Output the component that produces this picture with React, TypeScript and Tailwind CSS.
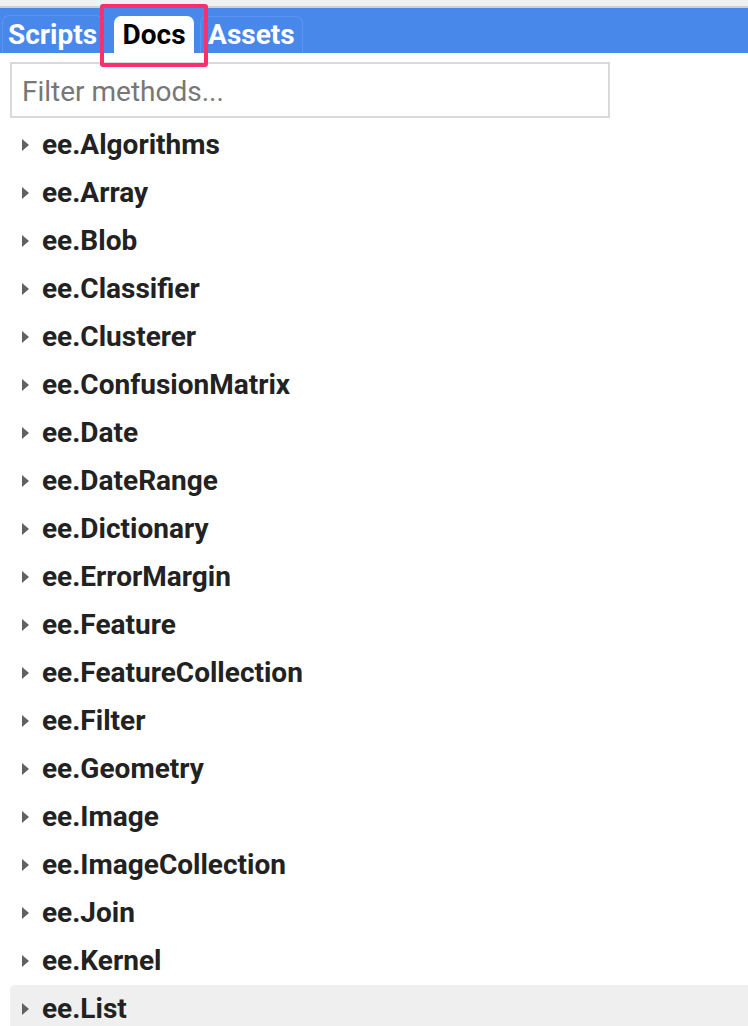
const items = [
  "ee.Algorithms",
  "ee.Array",
  "ee.Blob",
  "ee.Classifier",
  "ee.Clusterer",
  "ee.ConfusionMatrix",
  "ee.Date",
  "ee.DateRange",
  "ee.Dictionary",
  "ee.ErrorMargin",
  "ee.Feature",
  "ee.FeatureCollection",
  "ee.Filter",
  "ee.Geometry",
  "ee.Image",
  "ee.ImageCollection",
  "ee.Join",
  "ee.Kernel",
  "ee.List",
];

function Caret() {
  return (
    <svg width="9" height="14" viewBox="0 0 9 14" className="shrink-0">
      <path d="M1 1 L8 7 L1 13 Z" fill="#616161" />
    </svg>
  );
}

export default function App() {
  return (
    <div className="w-[748px] h-[1026px] overflow-hidden bg-white font-['Roboto',sans-serif]">
      <div className="h-[6px] bg-[#f1f1f1]" />
      <div className="h-[2px] bg-[#cfcfcf]" />
      <div className="relative h-[45px] bg-[#4888eb] flex items-end pl-[2px]">
        <div className="h-[38px] px-[5px] rounded-t-[7px] border border-b-0 border-[#5b95ee] flex items-center text-white font-bold text-[28px] leading-none">
          Scripts
        </div>
        <div className="ml-[11px] h-[37px] w-[80px] rounded-t-[7px] bg-white flex items-center justify-center text-black font-bold text-[28px] leading-none">
          Docs
        </div>
        <div className="ml-[6px] h-[37px] px-[7px] rounded-t-[7px] border border-b-0 border-[#5b95ee] flex items-center text-white font-bold text-[28px] leading-none">
          Assets
        </div>
        <div className="absolute left-[100px] top-[-4px] w-[108px] h-[63px] border-[4px] border-[#fb2e6e] rounded-[3px]" />
      </div>
      <div className="px-[10px] pt-[9px]">
        <div className="w-[600px] h-[56px] border-2 border-[#d9d9d9] flex items-center pt-[4px] px-[10px] text-[28px] text-[#777]">
          Filter methods...
        </div>
      </div>
      <div className="pt-[3px] pl-[10px]">
        {items.map((name, i) => (
          <div
            key={name}
            className={
              "h-[48px] flex items-center gap-[12px] pl-[11px] " +
              (i === items.length - 1 ? "bg-[#efefef] rounded-tl-[5px]" : "")
            }
          >
            <Caret />
            <span className="text-[28px] leading-none font-bold text-[#222]">{name}</span>
          </div>
        ))}
      </div>
    </div>
  );
}
